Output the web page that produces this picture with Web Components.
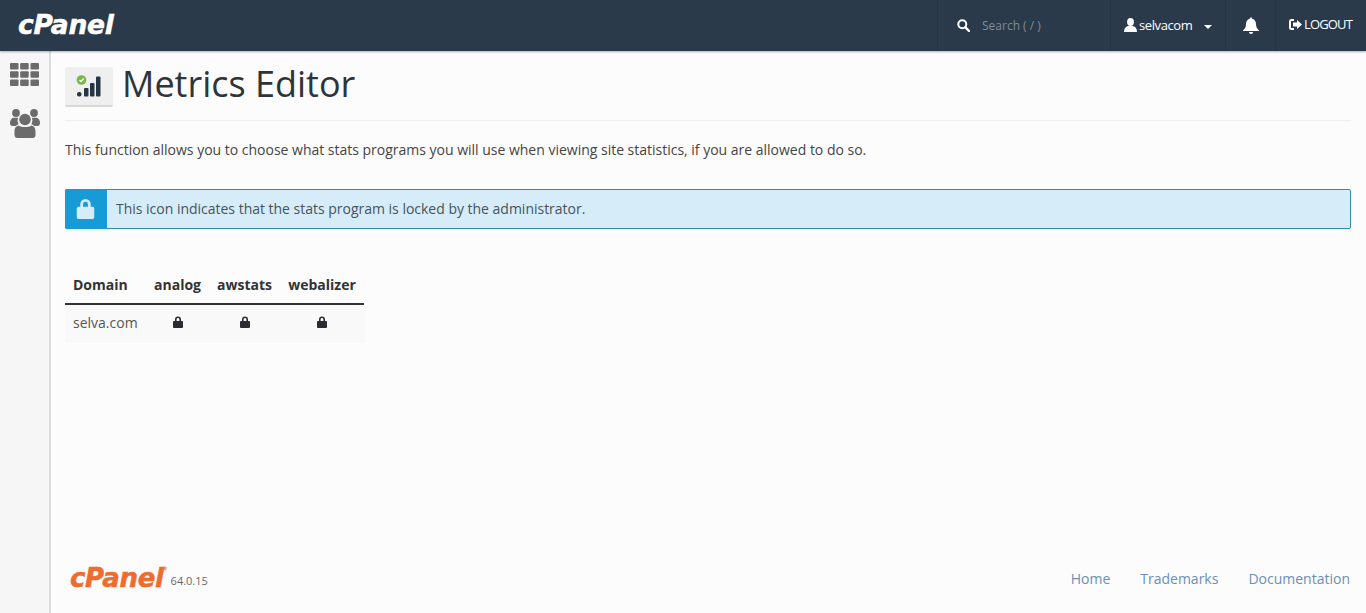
<!doctype html>
<html><head><meta charset="utf-8"><style>
html,body{margin:0;height:100%;overflow:hidden}
body{font-family:"Open Sans",sans-serif;color:#333;background:#fcfcfc}
</style></head><body>
<cp-app>
<cp-topbar slot="top"></cp-topbar>
<cp-sidebar slot="side"></cp-sidebar>
<cp-page-head title="Metrics Editor"></cp-page-head>
<p-text>This function allows you to choose what stats programs you will use when viewing site statistics, if you are allowed to do so.</p-text>
<cp-alert>This icon indicates that the stats program is locked by the administrator.</cp-alert>
<cp-table></cp-table>
<cp-footer slot="foot"></cp-footer>
</cp-app>
<script>
const LOCK=`<svg viewBox="0 0 20 24" style="display:block;width:100%;height:100%"><path fill="currentColor" fill-rule="evenodd" d="M4 10V7a6 6 0 0 1 12 0v3h1.5A2 2 0 0 1 20 12v10a2 2 0 0 1-2 2H2a2 2 0 0 1-2-2V12a2 2 0 0 1 2-2zm3.2 0h5.6V7a2.8 2.8 0 0 0-5.6 0z"/></svg>`;
function def(name,html){customElements.define(name,class extends HTMLElement{connectedCallback(){if(this.shadowRoot)return;const s=this.attachShadow({mode:'open'});s.innerHTML=typeof html==='function'?html(this):html;}});}
def('cp-app',`<style>
:host{display:grid;grid-template-columns:51px 1fr;grid-template-rows:51px 1fr;height:613px;width:1366px}
.top{grid-column:1/3;position:relative;z-index:2}
.main{display:flex;flex-direction:column;padding:0 15px 0 14px;min-width:0}
.foot{margin-top:auto}
</style><div class="top"><slot name="top"></slot></div><slot name="side"></slot><div class="main"><slot></slot><div class="foot"><slot name="foot"></slot></div></div>`);
def('cp-topbar',`<style>
:host{display:flex;align-items:stretch;height:51px;background:#2a3a4b;color:#fff;box-shadow:0 1px 2px rgba(0,0,0,.3);font-size:13px}
.logo{font:italic 700 26.5px/50px "DejaVu Sans",sans-serif;letter-spacing:-.3px;margin-left:18px;margin-right:auto;-webkit-text-stroke:.5px #fff}
.cell{display:flex;align-items:center;border-left:1px solid #263544;box-sizing:border-box}
.search{width:173px;padding:0 0 0 19px;color:#7f8b97;gap:12px;font-size:12px}
.user{width:115px;padding:0 0 2px 13px;gap:2px;letter-spacing:-.4px}
.user svg{margin-top:1px}
.bell{width:50px;padding-left:17px}
.out{width:91px;padding-left:13px;gap:2px;letter-spacing:-.85px;padding-bottom:3px}
.caret{width:0;height:0;border:4px solid transparent;border-top-color:#fff;border-bottom:0;margin-left:10px;margin-top:5px}
svg{display:block;flex:none}
</style><div class="logo">cPanel</div>
<div class="cell search"><svg width="13" height="13" viewBox="0 0 13 13"><circle cx="5.3" cy="5.3" r="4" fill="none" stroke="#fff" stroke-width="2"/><path d="M8.4 8.4L12 12" stroke="#fff" stroke-width="2.4" stroke-linecap="round"/></svg><span>Search ( / )</span></div>
<div class="cell user"><svg width="13" height="14" viewBox="0 0 13 14"><ellipse cx="6.5" cy="4" rx="3.4" ry="4" fill="#fff"/><path d="M0 14c0-3.5 1.5-5.5 4-6h5c2.500.5 4 2.500 4 6z" fill="#fff"/></svg><span>selvacom</span><i class="caret"></i></div>
<div class="cell bell"><svg width="16" height="17" viewBox="0 0 16 17"><path d="M8 0.500a1.200 1.200 0 0 1 1.200 1.300C11.800 2.400 13 4.500 13 7c0 3 1 4.500 3 6.500v.5H0v-.5C2 11.500 3 10 3 7c0-2.500 1.200-4.600 3.800-5.200A1.200 1.200 0 0 1 8 .5zM6 15h4a2 2 0 0 1-4 0z" fill="#fff"/></svg></div>
<div class="cell out"><svg width="13" height="11" viewBox="0 0 13 11"><path d="M5 1H2.500A1.500 1.500 0 0 0 1 2.500v6A1.500 1.500 0 0 0 2.500 10H5" fill="none" stroke="#fff" stroke-width="2"/><path d="M4 3.500h4V1l5 4.500L8 10V7.500H4z" fill="#fff"/></svg><span>LOGOUT</span></div>`);
def('cp-sidebar',`<style>
:host{display:flex;flex-direction:column;align-items:flex-start;box-sizing:border-box;width:51px;background:#f6f6f6;border-right:2px solid #dcdcdc;padding:12px 0 0 10px;gap:22px}
svg{display:block}
</style><svg width="29" height="23" viewBox="0 0 29 23" fill="#6b6b6b"><rect width="8.500" height="6.500" rx="1"/><rect x="10.200" width="8.500" height="6.500" rx="1"/><rect x="20.500" width="8.500" height="6.500" rx="1"/><rect y="8.200" width="8.500" height="6.500" rx="1"/><rect x="10.200" y="8.200" width="8.500" height="6.500" rx="1"/><rect x="20.500" y="8.200" width="8.500" height="6.500" rx="1"/><rect y="16.500" width="8.500" height="6.500" rx="1"/><rect x="10.200" y="16.500" width="8.500" height="6.500" rx="1"/><rect x="20.500" y="16.500" width="8.500" height="6.500" rx="1"/></svg>
<svg width="30" height="30" viewBox="0 0 30 30" fill="#6b6b6b"><circle cx="6" cy="5" r="3.900"/><circle cx="24" cy="5" r="3.900"/><path d="M0 15c0-2.800 1.500-4.800 3.500-5.200h4.500a8 8 0 0 0 .5 6.400 6 6 0 0 0-2.800 1.800H2.500C1 18 0 17 0 15zM30 15c0-2.800-1.500-4.800-3.500-5.200H22a8 8 0 0 1-.5 6.400 6 6 0 0 1 2.800 1.800h3.200C29 18 30 17 30 15z"/><circle cx="15" cy="11.500" r="5.800"/><path d="M4.500 23c0-3 1.500-5 4-5.500 3.500 2 9.500 2 13 0 2.500.5 4 2.500 4 5.500v4c0 1.800-1 3-3 3h-15c-2 0-3-1.200-3-3z"/></svg>`);
def('cp-page-head',el=>`<style>
:host{display:flex;align-items:flex-start;height:69px;border-bottom:1px solid #eee;gap:9px}
.ic{width:48px;height:38px;margin-top:16px;background:#efefef;border-bottom:2px solid #d8d8d8;border-radius:2px;display:flex;align-items:center;justify-content:center;flex:none}
h1{margin:9px 0 0;font:400 36px/48px "Open Sans",sans-serif;color:#2f3439}
</style><div class="ic"><svg width="26" height="22" viewBox="0 0 26 22"><rect x="1" y="17" width="4.500" height="4.500" rx="2" fill="#263544"/><rect x="8" y="13" width="4.500" height="8.500" rx="1" fill="#263544"/><rect x="14" y="8" width="4.500" height="13.500" rx="1" fill="#263544"/><rect x="20" y="1.500" width="4.500" height="20" rx="1" fill="#263544"/><circle cx="5.500" cy="5" r="4.800" fill="#7ab648"/><path d="M3.500 5l1.500 1.500L7.800 3.600" fill="none" stroke="#fff" stroke-width="1.400"/></svg></div><h1>${el.getAttribute('title')}</h1>`);
def('p-text',`<style>:host{display:block;font-size:14px;line-height:20px;color:#444;margin-top:19px;letter-spacing:-.008px}</style><slot></slot>`);
def('cp-alert',`<style>
:host{display:flex;align-items:center;height:40px;box-sizing:border-box;margin-top:29px;background:#d6ecf9;border:1px solid #2c8fb0;border-radius:2px;font-size:14px;color:#46535b}
.ic{width:42px;align-self:stretch;background:#179bd7;color:#d6ecf9;display:flex;align-items:center;justify-content:center;margin:-1px 0 -1px -1px;border-radius:2px 0 0 2px}
.ic span{width:19px;height:21px;display:block;margin:0 2px 2px 0}
.t{padding-left:9px;padding-bottom:2px;letter-spacing:-.012px}
</style><div class="ic"><span>${LOCK}</span></div><div class="t"><slot></slot></div>`);
def('cp-table',`<style>
:host{display:block;width:299px;margin-top:39px;font-size:14px;color:#333}
.row{display:grid;grid-template-columns:81px 63px 71px 84px;align-items:center}
.h{height:33px;border-bottom:2px solid #333;font-weight:700;padding-bottom:2px;box-sizing:content-box}
.b{height:38px;background:#f9f9f9;width:301px;padding-bottom:4px;box-sizing:border-box}
.c{text-align:center;color:#333}
.l{padding-left:8px}
.k{width:10px;height:12px;margin:auto;color:#2b2b33}
</style><div class="row h"><div class="l">Domain</div><div class="c">analog</div><div class="c">awstats</div><div class="c">webalizer</div></div>
<div class="row b"><div class="l" style="color:#555">selva.com</div><div class="k">${LOCK}</div><div class="k">${LOCK}</div><div class="k">${LOCK}</div></div>`);
def('cp-footer',`<style>
:host{display:flex;align-items:center;height:60px;padding-bottom:10px;box-sizing:border-box;font-size:14px}
.logo{font:italic 700 26px/30px "DejaVu Sans",sans-serif;letter-spacing:-.3px;color:#ef6c2f;-webkit-text-stroke:.5px #ef6c2f;margin-left:5px;position:relative}
.logo sup{font-size:5px;line-height:1;position:absolute;top:3px;right:-4px;letter-spacing:0;-webkit-text-stroke:0;font-style:normal}
.v{font-size:11px;color:#666;margin-left:7px;margin-top:4px}
nav{margin-left:auto;margin-right:1px;display:flex;gap:30px;color:#6a8fb5}
</style><span class="logo">cPanel<sup>®</sup></span><span class="v">64.0.15</span><nav><span>Home</span><span>Trademarks</span><span>Documentation</span></nav>`);
</script>
</body></html>
